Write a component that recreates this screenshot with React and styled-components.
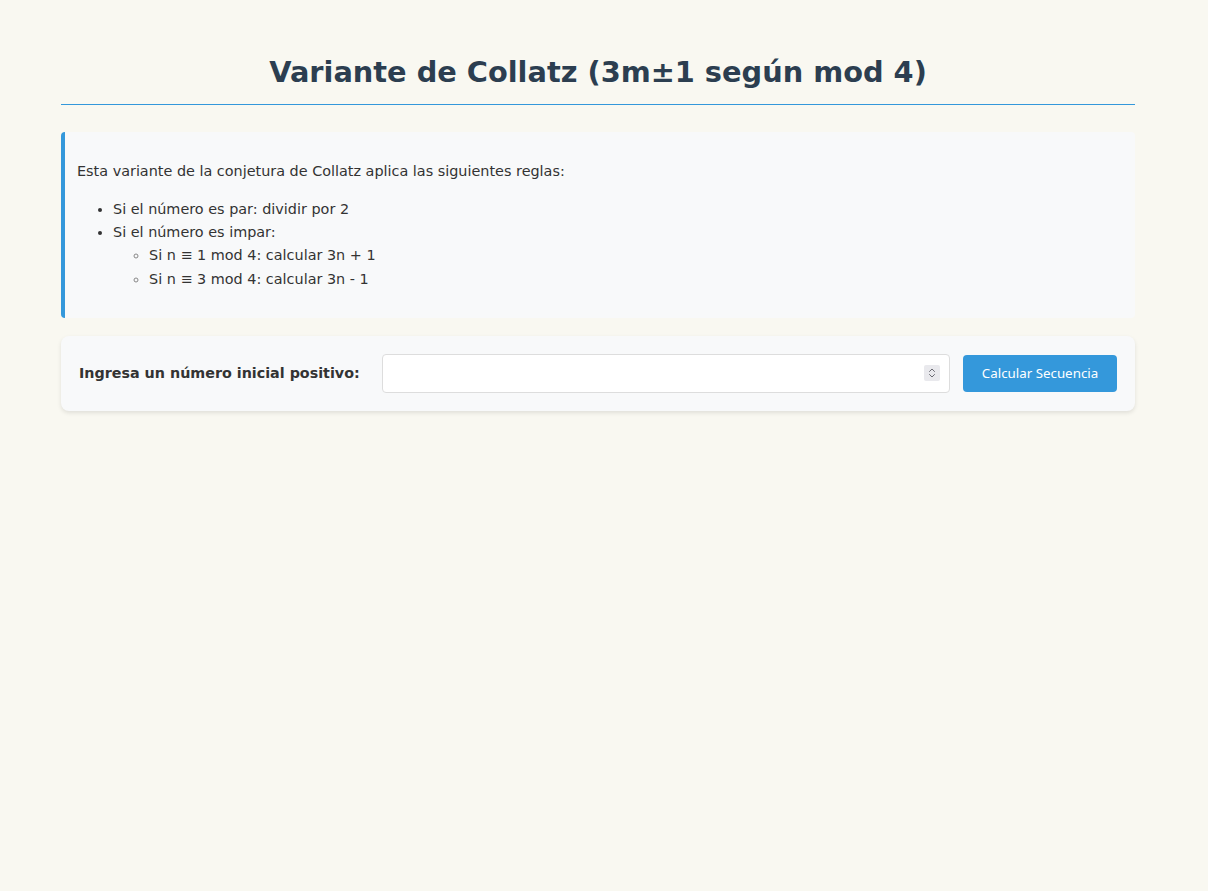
import React, { useState } from 'react';
import styled, { createGlobalStyle } from 'styled-components';

const GlobalStyle = createGlobalStyle`
  html, body {
    margin: 0;
    padding: 0;
    background: #f9f8f1;
  }

  body {
    font-family: "DejaVu Sans", Verdana, sans-serif;
    color: #333;
    line-height: 1.6;
  }
`;

const Page = styled.div`
  width: 1074px;
  padding: 55px 0 40px 61px;
`;

const Title = styled.h1`
  margin: 0 0 27px;
  padding-bottom: 14px;
  border-bottom: 1px solid #3498db;
  color: #2c3e50;
  font-size: 28.8px;
  line-height: 1.2;
  font-weight: bold;
  text-align: center;
`;

const InfoBox = styled.section`
  background: #f8f9fa;
  border-left: 4px solid #3498db;
  border-radius: 4px;
  padding: 14px 12px 13px;
  font-size: 14.4px;

  p {
    margin: 14.4px 0 15.4px;
  }
`;

const RuleList = styled.ul`
  margin: ${(p) => (p.$nested ? '0' : '0 0 14.4px')};
  padding-left: 36px;
  list-style-type: ${(p) => (p.$nested ? 'circle' : 'disc')};

  li::marker {
    color: ${(p) => (p.$nested ? '#888' : '#333')};
  }
`;

const FormCard = styled.div`
  display: flex;
  align-items: center;
  margin-top: 18px;
  padding: 18px;
  background: #f8f9fa;
  border-radius: 8px;
  box-shadow: 0 2px 4px rgba(0, 0, 0, 0.1);
`;

const Label = styled.label`
  font-size: 14.3px;
  font-weight: bold;
  color: #333;
  margin-right: 22px;
`;

const InputWrap = styled.div`
  position: relative;
  flex: 1;
  display: flex;
  margin-right: 13px;
`;

const NumberInput = styled.input`
  flex: 1;
  height: 39px;
  box-sizing: border-box;
  padding: 8px 32px 8px 10px;
  border: 1px solid #ddd;
  border-radius: 4px;
  background: #fff;
  font-size: 16px;
  -moz-appearance: textfield;

  &::-webkit-inner-spin-button,
  &::-webkit-outer-spin-button {
    -webkit-appearance: none;
    margin: 0;
  }
`;

const Spinner = styled.div`
  position: absolute;
  right: 10px;
  top: 50%;
  transform: translateY(-50%);
  width: 16px;
  height: 16px;
  border-radius: 2px;
  background: #e9e9ed;
  display: flex;
  align-items: center;
  justify-content: center;
  pointer-events: none;
`;

const Button = styled.button`
  width: 154px;
  height: 37px;
  padding: 0;
  border: none;
  border-radius: 4px;
  background: #3498db;
  color: #fff;
  font-family: "Noto Sans", "Open Sans", sans-serif;
  font-size: 13.33px;
  cursor: pointer;
`;

export default function App() {
  const [value, setValue] = useState('');

  return (
    <>
      <GlobalStyle />
      <Page>
        <Title>Variante de Collatz (3m±1 según mod 4)</Title>
        <InfoBox>
          <p>Esta variante de la conjetura de Collatz aplica las siguientes reglas:</p>
          <RuleList>
            <li>Si el número es par: dividir por 2</li>
            <li>
              Si el número es impar:
              <RuleList $nested>
                <li>Si n ≡ 1 mod 4: calcular 3n + 1</li>
                <li>Si n ≡ 3 mod 4: calcular 3n - 1</li>
              </RuleList>
            </li>
          </RuleList>
        </InfoBox>
        <FormCard>
          <Label htmlFor="start">Ingresa un número inicial positivo:</Label>
          <InputWrap>
            <NumberInput
              id="start"
              type="number"
              min="1"
              value={value}
              onChange={(e) => setValue(e.target.value)}
            />
            <Spinner>
              <svg width="10" height="14" viewBox="0 0 10 14" fill="none" stroke="#6b6b73" strokeWidth="1" strokeLinecap="round" strokeLinejoin="round">
                <path d="M2.5 5.5 L5 3 L7.5 5.5" />
                <path d="M2.5 8.5 L5 11 L7.5 8.5" />
              </svg>
            </Spinner>
          </InputWrap>
          <Button type="button">Calcular Secuencia</Button>
        </FormCard>
      </Page>
    </>
  );
}
